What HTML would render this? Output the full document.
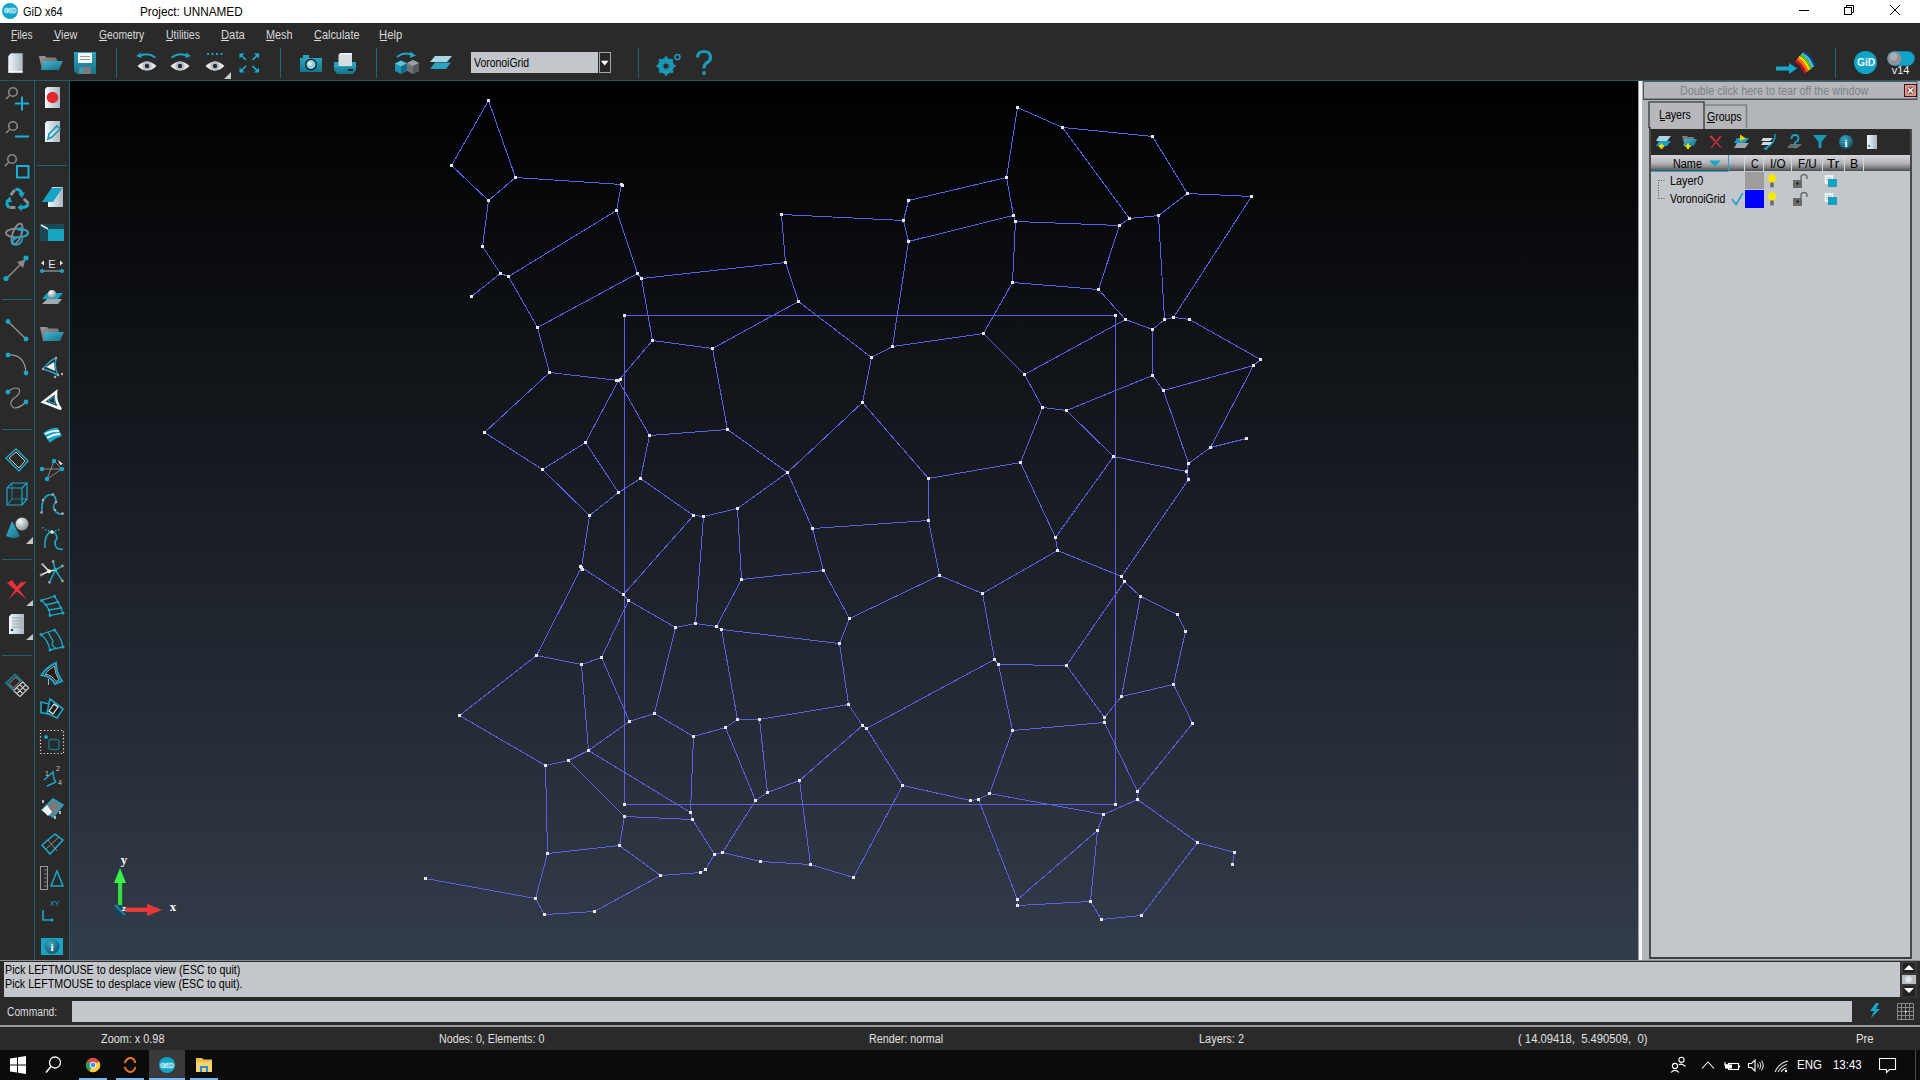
<!DOCTYPE html>
<html><head><meta charset="utf-8">
<style>
*{margin:0;padding:0;box-sizing:border-box}
html,body{width:1920px;height:1080px;overflow:hidden;background:#2a2a2a;font-family:"Liberation Sans",sans-serif;font-size:12px}
.a{position:absolute}
.t{position:absolute;white-space:nowrap;line-height:1;transform-origin:0 0}
svg{position:absolute;overflow:visible}
</style></head><body>
<!-- title bar -->
<div class="a" style="left:0;top:0;width:1920px;height:23px;background:#fff"></div>
<!-- menu + toolbar bg -->
<div class="a" style="left:0;top:23px;width:1920px;height:57px;background:#2a2a2a"></div>
<div class="a" style="left:0;top:80px;width:1920px;height:1px;background:#1d5f70"></div>
<!-- left toolbar separators -->
<div class="a" style="left:34px;top:81px;width:1px;height:879px;background:#1d6172"></div>
<div class="a" style="left:69px;top:81px;width:1px;height:879px;background:#1d6172"></div>
<!-- canvas -->
<div class="a" style="left:70px;top:81px;width:1568px;height:879px;background:linear-gradient(#000000,#333c4a)"></div>
<svg width="1568" height="879" viewBox="70 81 1568 879" style="position:absolute;left:70px;top:81px"><path d="M488.5 100.5L451.5 165.5M488.5 100.5L515.5 177.5M451.5 165.5L488.5 200.5M515.5 177.5L488.5 200.5M515.5 177.5L621.5 184.5M621.5 184.5L616.5 210.5M488.5 200.5L482.5 246.5M482.5 246.5L500.5 273.5M500.5 273.5L508.5 276.5M500.5 273.5L471.5 296.5M508.5 276.5L616.5 210.5M616.5 210.5L637.5 273.5M637.5 273.5L537.5 327.5M508.5 276.5L537.5 327.5M637.5 273.5L641.5 278.5M641.5 278.5L785.5 262.5M641.5 278.5L652.5 340.5M537.5 327.5L549.5 372.5M652.5 340.5L712.5 348.5M652.5 340.5L618.5 380.5M781.5 214.5L903.5 220.5M781.5 214.5L785.5 262.5M903.5 220.5L908.5 200.5M903.5 220.5L908.5 241.5M908.5 200.5L1006.5 177.5M908.5 241.5L1013.5 215.5M908.5 241.5L892.5 346.5M785.5 262.5L798.5 301.5M798.5 301.5L712.5 348.5M798.5 301.5L871.5 357.5M892.5 346.5L871.5 357.5M892.5 346.5L983.5 333.5M1017.5 107.5L1062.5 127.5M1017.5 107.5L1006.5 177.5M1062.5 127.5L1152.5 136.5M1062.5 127.5L1129.5 218.5M1152.5 136.5L1187.5 193.5M1187.5 193.5L1251.5 196.5M1187.5 193.5L1158.5 215.5M1158.5 215.5L1129.5 218.5M1129.5 218.5L1119.5 225.5M1006.5 177.5L1013.5 215.5M1013.5 215.5L1015.5 221.5M1015.5 221.5L1119.5 225.5M1015.5 221.5L1012.5 282.5M1119.5 225.5L1098.5 289.5M1012.5 282.5L1098.5 289.5M1012.5 282.5L983.5 333.5M1098.5 289.5L1125.5 319.5M1125.5 319.5L1152.5 329.5M1152.5 329.5L1164.5 319.5M1164.5 319.5L1158.5 215.5M1164.5 319.5L1173.5 317.5M1173.5 317.5L1189.5 319.5M1173.5 317.5L1251.5 196.5M1189.5 319.5L1260.5 359.5M983.5 333.5L1024.5 374.5M1024.5 374.5L1125.5 319.5M1024.5 374.5L1042.5 407.5M1042.5 407.5L1066.5 410.5M1066.5 410.5L1152.5 375.5M1152.5 375.5L1152.5 329.5M1066.5 410.5L1113.5 456.5M1042.5 407.5L1020.5 462.5M1020.5 462.5L928.5 478.5M928.5 478.5L862.5 402.5M928.5 478.5L928.5 520.5M928.5 520.5L812.5 528.5M928.5 520.5L939.5 575.5M1020.5 462.5L1055.5 537.5M1055.5 537.5L1113.5 456.5M1055.5 537.5L1057.5 550.5M1057.5 550.5L982.5 593.5M1057.5 550.5L1121.5 576.5M939.5 575.5L982.5 593.5M1121.5 576.5L1124.5 581.5M1121.5 576.5L1188.5 479.5M1260.5 359.5L1253.5 365.5M1253.5 365.5L1163.5 390.5M1253.5 365.5L1210.5 447.5M1163.5 390.5L1152.5 375.5M1163.5 390.5L1188.5 463.5M1210.5 447.5L1246.5 438.5M1210.5 447.5L1188.5 463.5M1188.5 463.5L1186.5 471.5M1186.5 471.5L1113.5 456.5M1186.5 471.5L1188.5 479.5M549.5 372.5L618.5 380.5M549.5 372.5L484.5 432.5M618.5 380.5L585.5 442.5M618.5 380.5L649.5 435.5M484.5 432.5L542.5 469.5M542.5 469.5L585.5 442.5M542.5 469.5L589.5 515.5M585.5 442.5L618.5 492.5M618.5 492.5L589.5 515.5M618.5 492.5L640.5 478.5M640.5 478.5L649.5 435.5M640.5 478.5L693.5 515.5M589.5 515.5L581.5 567.5M581.5 567.5L623.5 594.5M581.5 567.5L536.5 655.5M623.5 594.5L693.5 515.5M623.5 594.5L628.5 600.5M727.5 429.5L649.5 435.5M727.5 429.5L712.5 348.5M727.5 429.5L787.5 472.5M787.5 472.5L862.5 402.5M862.5 402.5L871.5 357.5M787.5 472.5L812.5 528.5M787.5 472.5L737.5 508.5M737.5 508.5L703.5 516.5M703.5 516.5L693.5 515.5M737.5 508.5L741.5 579.5M812.5 528.5L823.5 570.5M823.5 570.5L741.5 579.5M703.5 516.5L695.5 623.5M823.5 570.5L849.5 618.5M628.5 600.5L675.5 627.5M628.5 600.5L601.5 657.5M675.5 627.5L695.5 623.5M675.5 627.5L654.5 713.5M536.5 655.5L581.5 664.5M536.5 655.5L459.5 715.5M581.5 664.5L601.5 657.5M581.5 664.5L588.5 750.5M601.5 657.5L629.5 721.5M629.5 721.5L654.5 713.5M629.5 721.5L588.5 750.5M459.5 715.5L545.5 765.5M545.5 765.5L568.5 760.5M568.5 760.5L588.5 750.5M568.5 760.5L624.5 816.5M545.5 765.5L547.5 853.5M588.5 750.5L690.5 812.5M849.5 618.5L839.5 643.5M849.5 618.5L939.5 575.5M695.5 623.5L716.5 626.5M716.5 626.5L741.5 579.5M716.5 626.5L721.5 629.5M721.5 629.5L839.5 643.5M721.5 629.5L737.5 719.5M839.5 643.5L848.5 704.5M654.5 713.5L693.5 736.5M693.5 736.5L725.5 727.5M725.5 727.5L737.5 719.5M737.5 719.5L759.5 719.5M759.5 719.5L848.5 704.5M848.5 704.5L862.5 725.5M862.5 725.5L866.5 728.5M866.5 728.5L994.5 659.5M862.5 725.5L799.5 780.5M799.5 780.5L767.5 792.5M767.5 792.5L759.5 719.5M767.5 792.5L755.5 800.5M755.5 800.5L725.5 727.5M866.5 728.5L902.5 785.5M902.5 785.5L970.5 800.5M693.5 736.5L690.5 812.5M690.5 812.5L692.5 819.5M692.5 819.5L624.5 816.5M692.5 819.5L714.5 854.5M714.5 854.5L722.5 852.5M722.5 852.5L755.5 800.5M722.5 852.5L760.5 861.5M760.5 861.5L810.5 864.5M810.5 864.5L799.5 780.5M810.5 864.5L853.5 877.5M853.5 877.5L902.5 785.5M714.5 854.5L705.5 869.5M705.5 869.5L700.5 872.5M700.5 872.5L660.5 875.5M982.5 593.5L994.5 659.5M994.5 659.5L998.5 664.5M998.5 664.5L1066.5 665.5M998.5 664.5L1012.5 730.5M1066.5 665.5L1124.5 581.5M1066.5 665.5L1104.5 717.5M1124.5 581.5L1140.5 596.5M1140.5 596.5L1121.5 696.5M1121.5 696.5L1104.5 717.5M1104.5 717.5L1104.5 722.5M1104.5 722.5L1012.5 730.5M1104.5 722.5L1137.5 791.5M1137.5 791.5L1137.5 799.5M1137.5 791.5L1192.5 723.5M1137.5 799.5L1103.5 814.5M1137.5 799.5L1197.5 842.5M1103.5 814.5L989.5 793.5M1103.5 814.5L1097.5 830.5M989.5 793.5L978.5 799.5M989.5 793.5L1012.5 730.5M978.5 799.5L970.5 800.5M978.5 799.5L1017.5 899.5M1140.5 596.5L1177.5 614.5M1177.5 614.5L1185.5 631.5M1185.5 631.5L1173.5 684.5M1173.5 684.5L1121.5 696.5M1173.5 684.5L1192.5 723.5M624.5 816.5L619.5 845.5M619.5 845.5L547.5 853.5M619.5 845.5L660.5 875.5M547.5 853.5L535.5 898.5M425.5 878.5L535.5 898.5M535.5 898.5L544.5 914.5M544.5 914.5L594.5 911.5M594.5 911.5L660.5 875.5M1097.5 830.5L1017.5 899.5M1097.5 830.5L1090.5 901.5M1017.5 899.5L1017.5 905.5M1017.5 905.5L1090.5 901.5M1090.5 901.5L1101.5 919.5M1101.5 919.5L1141.5 915.5M1141.5 915.5L1197.5 842.5M1197.5 842.5L1234.5 852.5M1234.5 852.5L1232.5 864.5M624.5 315.5L1115.5 315.5M1115.5 315.5L1115.5 804.5M1115.5 804.5L624.5 804.5M624.5 804.5L624.5 315.5" stroke="#5e5ee6" stroke-width="1" fill="none" shape-rendering="crispEdges"/><path d="M487 99h3v3h-3zM450 164h3v3h-3zM514 176h3v3h-3zM487 199h3v3h-3zM620 183h3v3h-3zM615 209h3v3h-3zM481 245h3v3h-3zM499 272h3v3h-3zM507 275h3v3h-3zM470 295h3v3h-3zM636 272h3v3h-3zM640 277h3v3h-3zM536 326h3v3h-3zM651 339h3v3h-3zM780 213h3v3h-3zM902 219h3v3h-3zM907 199h3v3h-3zM907 240h3v3h-3zM784 261h3v3h-3zM797 300h3v3h-3zM711 347h3v3h-3zM891 345h3v3h-3zM1016 106h3v3h-3zM1061 126h3v3h-3zM1151 135h3v3h-3zM1005 176h3v3h-3zM1186 192h3v3h-3zM1012 214h3v3h-3zM1014 220h3v3h-3zM1128 217h3v3h-3zM1157 214h3v3h-3zM1118 224h3v3h-3zM1011 281h3v3h-3zM1097 288h3v3h-3zM1124 318h3v3h-3zM1163 318h3v3h-3zM1172 316h3v3h-3zM1188 318h3v3h-3zM1151 328h3v3h-3zM982 332h3v3h-3zM1250 195h3v3h-3zM548 371h3v3h-3zM617 379h3v3h-3zM483 431h3v3h-3zM648 434h3v3h-3zM584 441h3v3h-3zM541 468h3v3h-3zM639 477h3v3h-3zM617 491h3v3h-3zM588 514h3v3h-3zM580 566h3v3h-3zM622 593h3v3h-3zM726 428h3v3h-3zM870 356h3v3h-3zM861 401h3v3h-3zM786 471h3v3h-3zM692 514h3v3h-3zM702 515h3v3h-3zM736 507h3v3h-3zM811 527h3v3h-3zM822 569h3v3h-3zM740 578h3v3h-3zM1023 373h3v3h-3zM1151 374h3v3h-3zM1041 406h3v3h-3zM1065 409h3v3h-3zM1112 455h3v3h-3zM1019 461h3v3h-3zM927 477h3v3h-3zM927 519h3v3h-3zM1054 536h3v3h-3zM1056 549h3v3h-3zM938 574h3v3h-3zM981 592h3v3h-3zM1120 575h3v3h-3zM1123 580h3v3h-3zM1259 358h3v3h-3zM1252 364h3v3h-3zM1162 389h3v3h-3zM1245 437h3v3h-3zM1209 446h3v3h-3zM1187 462h3v3h-3zM1185 470h3v3h-3zM1187 478h3v3h-3zM627 599h3v3h-3zM674 626h3v3h-3zM535 654h3v3h-3zM580 663h3v3h-3zM600 656h3v3h-3zM458 714h3v3h-3zM653 712h3v3h-3zM628 720h3v3h-3zM587 749h3v3h-3zM567 759h3v3h-3zM544 764h3v3h-3zM623 815h3v3h-3zM848 617h3v3h-3zM694 622h3v3h-3zM715 625h3v3h-3zM720 628h3v3h-3zM838 642h3v3h-3zM847 703h3v3h-3zM736 718h3v3h-3zM758 718h3v3h-3zM724 726h3v3h-3zM692 735h3v3h-3zM861 724h3v3h-3zM865 727h3v3h-3zM798 779h3v3h-3zM766 791h3v3h-3zM754 799h3v3h-3zM901 784h3v3h-3zM689 811h3v3h-3zM691 818h3v3h-3zM1139 595h3v3h-3zM993 658h3v3h-3zM997 663h3v3h-3zM1065 664h3v3h-3zM1120 695h3v3h-3zM1103 716h3v3h-3zM1103 721h3v3h-3zM1011 729h3v3h-3zM1136 790h3v3h-3zM1136 798h3v3h-3zM988 792h3v3h-3zM977 798h3v3h-3zM969 799h3v3h-3zM1102 813h3v3h-3zM1176 613h3v3h-3zM1184 630h3v3h-3zM1172 683h3v3h-3zM1191 722h3v3h-3zM618 844h3v3h-3zM546 852h3v3h-3zM424 877h3v3h-3zM659 874h3v3h-3zM534 897h3v3h-3zM543 913h3v3h-3zM593 910h3v3h-3zM713 853h3v3h-3zM721 851h3v3h-3zM759 860h3v3h-3zM809 863h3v3h-3zM852 876h3v3h-3zM704 868h3v3h-3zM699 871h3v3h-3zM1096 829h3v3h-3zM1196 841h3v3h-3zM1016 898h3v3h-3zM1016 904h3v3h-3zM1089 900h3v3h-3zM1100 918h3v3h-3zM1140 914h3v3h-3zM1233 851h3v3h-3zM1231 863h3v3h-3zM623 314h3v3h-3zM1114 314h3v3h-3zM1114 803h3v3h-3zM623 803h3v3h-3zM621 184h3v3h-3zM615 379h3v3h-3zM619 378h3v3h-3zM579 565h3v3h-3zM581 568h3v3h-3z" fill="#e6e6e6"/></svg>
<!-- sash and right panel -->
<div class="a" style="left:1638px;top:81px;width:1px;height:879px;background:#9a9ca0"></div>
<div class="a" style="left:1639px;top:81px;width:3px;height:879px;background:#f4f6f8"></div>
<div class="a" style="left:1642px;top:81px;width:278px;height:879px;background:#b2b5b9"></div>
<!-- message area -->
<div class="a" style="left:0;top:960px;width:1920px;height:1px;background:#8a8c90"></div>
<div class="a" style="left:0;top:961px;width:1920px;height:36px;background:#2a2a2a"></div>
<div class="a" style="left:4px;top:962px;width:1896px;height:35px;background:#c3c6ca"></div>
<div class="a" style="left:0;top:997px;width:1920px;height:28px;background:#2a2a2a"></div>
<div class="a" style="left:72px;top:1001px;width:1780px;height:21px;background:#c3c6ca"></div>
<div class="a" style="left:0;top:1025px;width:1920px;height:2px;background:#9a9a9a"></div>
<div class="a" style="left:0;top:1027px;width:1920px;height:23px;background:#2a2a2a"></div>
<!-- taskbar -->
<div class="a" style="left:0;top:1050px;width:1920px;height:30px;background:#0b0b0c"></div>
<svg width="1920" height="1080" style="left:0;top:0" viewBox="0 0 1920 1080">
<defs>
<linearGradient id="gDoc" x1="0" x2="1" y1="0" y2="0"><stop offset="0" stop-color="#f0faff"/><stop offset="1" stop-color="#a9b6be"/></linearGradient>
<linearGradient id="gTeal" x1="0" x2="1" y1="0" y2="1"><stop offset="0" stop-color="#47bad6"/><stop offset="1" stop-color="#146f86"/></linearGradient>
<linearGradient id="gTeal2" x1="0" x2="0" y1="0" y2="1"><stop offset="0" stop-color="#2aa2c0"/><stop offset="1" stop-color="#16758d"/></linearGradient>
<linearGradient id="gGrey" x1="0" x2="1" y1="0" y2="1"><stop offset="0" stop-color="#9a9a9a"/><stop offset="1" stop-color="#5c5c5c"/></linearGradient>
<radialGradient id="gSph" cx="0.35" cy="0.3" r="0.8"><stop offset="0" stop-color="#f4f8fa"/><stop offset="1" stop-color="#7d8c94"/></radialGradient>
<radialGradient id="gInfo" cx="0.4" cy="0.3" r="0.8"><stop offset="0" stop-color="#3aa6c0"/><stop offset="1" stop-color="#0b4d60"/></radialGradient>
<linearGradient id="gHdr" x1="0" x2="0" y1="0" y2="1"><stop offset="0" stop-color="#d4d6d9"/><stop offset="0.5" stop-color="#b4b6b9"/><stop offset="0.8" stop-color="#7a7c7f"/><stop offset="1" stop-color="#4a4c4e"/></linearGradient>
</defs>
<!-- title bar icons -->
<circle cx="10" cy="11" r="8" fill="#12a5c8"/>
<text x="10" y="13" font-family="Liberation Sans" font-size="7" font-weight="700" fill="none" stroke="#d9f2f8" stroke-width="0.6" text-anchor="middle">GiD</text>
<path d="M1799 10.5H1809" stroke="#000" stroke-width="1"/>
<path d="M1846.5 7.5V5.5H1853.5V12.5H1851.5" fill="none" stroke="#000" stroke-width="1"/>
<rect x="1844.5" y="7.5" width="7" height="7" fill="none" stroke="#000" stroke-width="1"/>
<path d="M1890 5L1900 15M1900 5L1890 15" stroke="#000" stroke-width="1"/>
<!-- toolbar separators -->
<path d="M116.5 48V78M280.5 48V78M376.5 48V78M638.5 48V78M1835.5 48V78" stroke="#1d6678" stroke-width="1"/>
<!-- new doc -->
<path d="M11 53H23V73H8V56Z" fill="url(#gDoc)" stroke="#3a3a3a" stroke-width="0.6"/>
<path d="M8.5 71H22.5V72.6H8.5Z" fill="#f8fcff"/>
<!-- open folder -->
<path d="M39 56H45L46.5 57.5H56L57 60V70H42Z" fill="url(#gGrey)"/>
<path d="M44 61H63L59 70H41Z" fill="url(#gTeal)"/>
<!-- save -->
<path d="M74 52H96V74H77L74 71Z" fill="url(#gTeal2)"/>
<rect x="78" y="53" width="14" height="10" fill="#f6f6f6"/>
<path d="M80 56.5H90M80 59.5H90" stroke="#9a9a9a" stroke-width="1"/>
<rect x="79" y="67" width="12" height="7" fill="#7a7a7a"/>
<rect x="80" y="68" width="3" height="5" fill="#19a7c9"/>
<!-- eyes -->
<g id="eye"></g>
<path d="M137.5 66Q147 57 156.5 66Q147 75 137.5 66Z" fill="#e6e8ea"/>
<circle cx="147" cy="66" r="4.6" fill="#b4c0c8"/><circle cx="147" cy="66" r="2.2" fill="#26292e"/>
<path d="M139 56.5Q147 51.5 155.5 57.5" fill="none" stroke="#1aa4c4" stroke-width="2"/>
<path d="M136 56L141 52.5L141.5 58Z" fill="#1aa4c4"/>
<path d="M170.5 66Q180 57 189.5 66Q180 75 170.5 66Z" fill="#e6e8ea"/>
<circle cx="180" cy="66" r="4.6" fill="#b4c0c8"/><circle cx="180" cy="66" r="2.2" fill="#26292e"/>
<path d="M171.5 57.5Q180 51.5 188 56.5" fill="none" stroke="#1aa4c4" stroke-width="2"/>
<path d="M191 56L186 52.5L185.5 58Z" fill="#1aa4c4"/>
<path d="M205.5 66Q215 57 224.5 66Q215 75 205.5 66Z" fill="#e6e8ea"/>
<circle cx="215" cy="66" r="4.6" fill="#b4c0c8"/><circle cx="215" cy="66" r="2.2" fill="#26292e"/>
<path d="M207 53h2v2h-2zM211.5 53h2v2h-2zM216 53h2v2h-2zM220.5 53h2v2h-2z" fill="#1aa4c4"/>
<path d="M231 72V79H224Z" fill="#c8c8cc"/>
<!-- zoom fit arrows -->
<g stroke="#17aed4" stroke-width="1.6" fill="none"><path d="M241 55L246 60M257.5 55L252.5 60M241 71L246 66M257.5 71L252.5 66"/></g>
<path d="M239.5 53.5H244.5L239.5 58.5Z M259 53.5H254L259 58.5Z M239.5 72.5H244.5L239.5 67.5Z M259 72.5H254L259 67.5Z" fill="#17aed4"/>
<!-- camera -->
<rect x="300" y="58" width="22" height="14" fill="url(#gTeal2)"/>
<rect x="303" y="55" width="6" height="3" fill="#2aa2c0"/>
<circle cx="311" cy="64.5" r="5.2" fill="#8fd0e0" stroke="#0d1a1e" stroke-width="1.3"/>
<circle cx="310" cy="63.5" r="2" fill="#d8f2f8"/>
<!-- printer -->
<path d="M334 62H356V70L353 74H337L334 70Z" fill="url(#gTeal2)"/>
<path d="M334 62H356V67H334Z" fill="#2b9fbb"/>
<path d="M338.5 55L340.5 53H352V66H338.5Z" fill="#d4dde2"/>
<path d="M338.5 55L340.5 53H352V54.5H340Z" fill="#f4f8fa"/>
<rect x="348" y="69" width="5" height="2" fill="#1d2a2e"/>
<!-- cubes -->
<path d="M397 57Q404 51 413 55" fill="none" stroke="#1aa4c4" stroke-width="2"/>
<path d="M410 51.5L416 55.5L410 58Z" fill="#1aa4c4"/>
<path d="M401 60.5L407 63.5V71L401 74L395 71V63.5Z" fill="#1f93b0"/>
<path d="M395 63.5L401 60.5L407 63.5L401 66.5Z" fill="#5cc4dc"/><path d="M401 66.5L407 63.5V71L401 74Z" fill="#146f86"/>
<path d="M413 60L419 63V71L413 74L407 71V63Z" fill="#6f7478"/>
<path d="M407 63L413 60L419 63L413 66Z" fill="#9aa0a4"/><path d="M413 66L419 63V71L413 74Z" fill="#555a5e"/>
<!-- layers -->
<path d="M435 56H452L447 62H430Z" fill="#a9d6e2"/>
<path d="M435 62.5H451L446 69H430Z" fill="#2ba3bf"/>
<!-- combo -->
<rect x="471" y="52" width="127" height="21" fill="#c3c6ca"/>
<rect x="599.5" y="52.5" width="11" height="20" fill="#262626" stroke="#a6a8ab" stroke-width="1"/>
<path d="M600.8 60.8H608.6L604.7 65.6Z" fill="#fff"/>
<!-- gear -->
<circle cx="666" cy="66" r="6" fill="none" stroke="#1b9ab8" stroke-width="4"/>
<g stroke="#1b9ab8" stroke-width="2.6"><path d="M666 56.5V75.5M656.5 66H675.5M659.3 59.3L672.7 72.7M672.7 59.3L659.3 72.7"/></g>
<circle cx="666" cy="66" r="2.6" fill="#2a2a2a"/>
<circle cx="677.5" cy="57" r="2.6" fill="none" stroke="#1b9ab8" stroke-width="1.5"/>
<!-- question -->
<path d="M697.5 57.5Q697.5 51.5 704 51.5Q710.5 51.5 710.5 57.5Q710.5 61 706.5 63Q704 64.5 704 68.5" fill="none" stroke="#1b9ab8" stroke-width="3.2"/>
<circle cx="704" cy="73" r="2" fill="#1b9ab8"/>
<!-- right toolbar -->
<rect x="1776" y="66.5" width="14" height="4" fill="#17a9cc"/>
<path d="M1789 63L1797 68.5L1789 74Z" fill="#17a9cc"/>
<g fill="none" stroke-width="2.4">
<path d="M1795.5 61Q1801 63 1805.5 73" stroke="#c8102e"/>
<path d="M1797.2 59Q1802.8 61 1807.5 71.5" stroke="#ff6a00"/>
<path d="M1798.9 57Q1804.6 59 1809.5 70" stroke="#ffd800"/>
<path d="M1800.6 55Q1806.4 57 1811.4 68.5" stroke="#53c43a"/>
<path d="M1802.3 53.5Q1808.2 55.2 1813.2 67" stroke="#4fb8e8"/>
<path d="M1804 52.5Q1810 54 1815 65.5" stroke="#0a3f7a"/>
</g>
<circle cx="1865.5" cy="62.5" r="11.5" fill="#0fa3c6"/>
<rect x="1887" y="51" width="28" height="15" rx="7.5" fill="#0fa3c6" stroke="#1b3a44" stroke-width="0.6"/>
<circle cx="1894.5" cy="58.5" r="7" fill="#8c9297"/>
<circle cx="1893.5" cy="56.5" r="4" fill="#a7adb2"/>
<!-- left toolbar col separators (horizontal) -->
<path d="M2 299.5H32M2 429.5H32M2 559.5H32M2 655.5H32M37 165.5H67" stroke="#1d6678" stroke-width="1"/>
<g fill="none" stroke="#8a8a8a" stroke-width="1.6">
<circle cx="13" cy="92" r="4.3"/><path d="M9.8 95.2L6 99"/>
<circle cx="13" cy="126" r="4.3"/><path d="M9.8 129.2L6 133"/>
<circle cx="12" cy="159" r="4.3"/><path d="M8.8 162.2L5 166"/>
</g>
<g fill="none" stroke="#17b0d8" stroke-width="2">
<path d="M15 103.5H29M22 96.5V110.5"/>
<path d="M15 136.5H29"/>
<rect x="17" y="166" width="11.5" height="11.5"/>
</g>
<!-- recycle -->
<g fill="none" stroke-width="3">
<path d="M10.7 195.2L14.8 189.9M23.9 198.7L28.3 203.4M10 207.5H15.4" stroke="#8e8e8e"/>
<path d="M15.4 189.5Q19.5 188.5 21.5 193M28.3 203.5Q27.5 207.5 21.5 207.5M9.4 207.8Q5.5 205 7.8 200.5" stroke="#17a8cc"/>
</g>
<path d="M18.3 193.3L25 192.3L22 198Z M21.8 203.8L17.5 207.5L21.8 211.2Z M5.2 201.5L9.8 196.5L12.2 202.2Z" fill="#17a8cc"/>
<!-- rotate atom -->
<g fill="none" stroke-width="1.8">
<ellipse cx="17" cy="233" rx="11" ry="4.3" stroke="#8e8e8e"/>
<ellipse cx="17" cy="234" rx="4.3" ry="11" stroke="#8e8e8e" transform="rotate(20 17 234)"/>
<path d="M17 228.7Q28 229 28 233Q28 237.3 17 237.3" stroke="#17a8cc"/>
<path d="M22.6 238.6Q20.5 245.5 15.5 244.8Q12.5 244 12.5 240" stroke="#17a8cc"/>
</g>
<path d="M20.5 226.5L23.5 231L18 231Z M12 236.5L17.5 238L13 241.5Z" fill="#17a8cc"/>
<!-- arrow line -->
<path d="M7 278L24 261" stroke="#8a8a8a" stroke-width="1.6"/>
<path d="M25.5 259.5L23 268L17 262Z" fill="#8a8a8a"/>
<circle cx="6" cy="278.5" r="2.6" fill="#17a8cc"/><circle cx="26" cy="258" r="2.6" fill="#17a8cc"/>
<!-- line -->
<path d="M8 321.5L26 339" stroke="#9a9a9a" stroke-width="1.2"/>
<circle cx="8" cy="321.5" r="2.4" fill="#17a8cc"/><circle cx="26" cy="339" r="2.4" fill="#17a8cc"/>
<!-- arc -->
<path d="M8 355Q25 354 26 373" fill="none" stroke="#9a9a9a" stroke-width="1.2"/>
<circle cx="8" cy="355" r="2.4" fill="#17a8cc"/><circle cx="26" cy="373" r="2.4" fill="#17a8cc"/>
<!-- s curve -->
<path d="M8 392Q14 386 19 389Q22 393 13 399Q8 404 14 408Q20 408 26 402" fill="none" stroke="#9a9a9a" stroke-width="1.2"/>
<circle cx="8" cy="392" r="2.4" fill="#17a8cc"/><circle cx="26" cy="402" r="2.4" fill="#17a8cc"/>
<!-- diamond surface -->
<path d="M6 458L16 449L28 461L19 471Z" fill="none" stroke="#17a8cc" stroke-width="1.5"/>
<path d="M9 458L16 452L25 461L19 468Z" fill="none" stroke="#d6c7c0" stroke-width="1"/>
<!-- cube wire -->
<g fill="none" stroke="#17a8cc" stroke-width="1.2">
<path d="M7 488H22V505H7Z M12 483H27V499H22 M7 488L12 483 M22 488L27 483 M22 505L27 499"/>
<path d="M12 483V499H22M7 505L12 499" stroke-opacity="0.6"/>
</g>
<!-- cone sphere -->
<circle cx="22" cy="524" r="6.5" fill="url(#gSph)"/>
<path d="M12 521L20 536Q15 540 6 536Z" fill="url(#gTeal)"/>
<path d="M33 537V544H26Z" fill="#c8c8cc"/>
<!-- red X -->
<path d="M7 583L12 580L27 600Z" fill="#e8313c"/><path d="M27 581.5L20 582.5L8 600Z" fill="#e8313c"/>
<path d="M33 600V606H26Z" fill="#c8c8cc"/>
<!-- doc -->
<path d="M11.5 614H24V634H9V616.5Z" fill="url(#gDoc)"/>
<path d="M12 618H22M12 621H22M12 624H22M12 627H22" stroke="#9aa6ac" stroke-width="1"/>
<circle cx="12" cy="630" r="1.3" fill="#105a6e"/>
<path d="M33 634V640H26Z" fill="#c8c8cc"/>
<!-- mesh surface -->
<path d="M13.6 690.5L6.0 683.1L15.3 674.4L22.7 681.8" fill="none" stroke="#157d96" stroke-width="1.8"/>
<path d="M8.8 683.7L15.8 677.1L20.2 681.5L13.3 688.1Z" fill="none" stroke="#d0b0a8" stroke-width="0.8"/>
<path d="M13.6 690.5L22.7 681.8M16.8 693.6L25.7 684.8M19.9 696.6L28.7 687.8M13.6 690.5L19.9 696.6M16.7 687.6L22.8 693.7M19.7 684.7L25.8 690.7M22.7 681.8L28.7 687.8" fill="none" stroke="#d8d8d8" stroke-width="1.1"/>
<!-- col 2 -->
<path d="M47 87H60V108H45V89Z" fill="url(#gDoc)"/>
<circle cx="52.5" cy="97.5" r="5.8" fill="#e4262f"/>
<path d="M47 121H60V142H45V123Z" fill="url(#gDoc)"/>
<path d="M48 139L49 134L57 126L60 129L52 137Z" fill="none" stroke="#1b9ab8" stroke-width="1.6"/>
<!-- surface -->
<path d="M52 187H63V207H48V202Z" fill="url(#gDoc)"/>
<path d="M51.5 188H62.5L53 202H42Z" fill="#17a4c4"/>
<!-- box -->
<path d="M40 224H64V241H40Z" fill="#1a4a56"/>
<path d="M48 229H64V241H48Z" fill="#1aa2c2"/>
<path d="M41 225L48 229" stroke="#e8e8e8" stroke-width="1.5"/>
<!-- E arrows -->
<text x="52" y="268" font-family="Liberation Sans" font-size="11" fill="#e8e8e8" text-anchor="middle">E</text>
<path d="M41 263L44 260.5V265.5Z M63 263L60 260.5V265.5Z" fill="#e8e8e8"/>
<path d="M42 271H62" stroke="#8a8a8a" stroke-width="1.5"/>
<circle cx="42" cy="271" r="2" fill="#17a8cc"/><circle cx="62" cy="271" r="2" fill="#17a8cc"/>
<!-- layers with sphere -->
<path d="M47 299H62L58 304H42Z" fill="#a0a8b0"/>
<path d="M47 293H63L58 299H42Z" fill="#17a0c0"/>
<circle cx="52" cy="294" r="4" fill="url(#gSph)"/>
<!-- folder -->
<path d="M40 327H47L48.5 328.5H58L59 331V341H43Z" fill="url(#gGrey)"/>
<path d="M45 332H64L60 341H43Z" fill="url(#gTeal)"/>
<!-- surface1 -->
<path d="M43 369Q50 360 56 358Q54 368 58 375Q50 371 43 369Z" fill="none" stroke="#17a8cc" stroke-width="1.4"/>
<path d="M46 367L54 362L55 371Z" fill="#f0f0f0"/>
<circle cx="43" cy="369" r="1.2" fill="#c0a8a0"/><circle cx="56" cy="358" r="1.2" fill="#c0a8a0"/><circle cx="58" cy="375" r="1.2" fill="#c0a8a0"/><circle cx="62" cy="374" r="1.2" fill="#c0a8a0"/><circle cx="55" cy="377" r="1.2" fill="#c0a8a0"/>
<!-- surface2 -->
<path d="M43 402Q51 396 56 392Q55 402 61 409Q51 405 43 402Z" fill="none" stroke="#f0f8fa" stroke-width="2.6"/>
<path d="M48 401L54 397L55 404Z" fill="none" stroke="#17a8cc" stroke-width="1"/>
<!-- striped surface -->
<path d="M43 433Q52 427 58 428L62 436Q55 438 50 443Z" fill="#17a8cc"/>
<path d="M45 434Q53 430 59 431M47 438Q54 434 60 434" stroke="#f4f4f4" stroke-width="1.8" fill="none"/>
<!-- points connected -->
<path d="M42 469H62L47 479M47 479L54 461L62 469" stroke="#8a8a8a" stroke-width="1" fill="none"/>
<circle cx="42" cy="469" r="2.2" fill="#17a8cc"/><circle cx="62" cy="469" r="2.2" fill="#17a8cc"/><circle cx="54" cy="461" r="2.2" fill="#17a8cc"/><circle cx="47" cy="479" r="2.2" fill="#17a8cc"/>
<path d="M58 460L63 464L60 465Z" fill="#e8e8e8"/>
<!-- nurbs -->
<path d="M42 512Q41 499 48 495Q56 493 56 502Q51 507 56 512Q60 515 63 514" fill="none" stroke="#17a8cc" stroke-width="1.6"/>
<circle cx="41.5" cy="512.5" r="1.3" fill="#b0a8a4"/><circle cx="43" cy="500" r="1.3" fill="#b0a8a4"/><circle cx="53" cy="494.5" r="1.3" fill="#b0a8a4"/><circle cx="56" cy="502" r="1.3" fill="#b0a8a4"/><circle cx="55" cy="510" r="1.3" fill="#b0a8a4"/><circle cx="62.5" cy="513.5" r="1.3" fill="#b0a8a4"/>
<!-- curve with dots -->
<path d="M45 548Q44 536 50 532Q56 531 57 538Q53 544 57 548Q60 550 63 549" fill="none" stroke="#17a8cc" stroke-width="1.6"/>
<path d="M42 527h1.5v1.5h-1.5zM45 529h1.5v1.5h-1.5zM48 530h1.5v1.5h-1.5zM55 530h1.5v1.5h-1.5zM58 529h1.5v1.5h-1.5z" fill="#17a8cc"/>
<circle cx="52" cy="532" r="1.8" fill="#f0f0f0"/>
<!-- star -->
<g stroke="#17a8cc" stroke-width="1.5"><path d="M55.4 570L53.1 561.5M55.4 570L62.4 566M55.4 570L62.4 581M55.4 570L49.4 582.3"/></g>
<g stroke="#e0e0e0" stroke-width="1.6" fill="none"><path d="M55.4 570L49 571.2L42.5 564.3M49 571.2L41.1 575"/></g>
<circle cx="49" cy="571.2" r="2" fill="#f4f4f4"/><circle cx="55.4" cy="570" r="1.8" fill="#3cc0e0"/>
<g fill="#9a9a9a"><circle cx="53.1" cy="561.5" r="1.4"/><circle cx="62.4" cy="566" r="1.4"/><circle cx="62.4" cy="581" r="1.4"/><circle cx="49.4" cy="582.3" r="1.4"/><circle cx="42.5" cy="564.3" r="1.4"/><circle cx="41.1" cy="575" r="1.4"/></g>
<!-- grid surface -->
<g fill="none" stroke="#17a8cc" stroke-width="1.3"><path d="M41.6 600.4L46 605L49 610L50 615.6L63 613L61 608L58 602L54.5 596.2Z M46 605L58 602M49 610L61 608"/></g>
<g fill="#17a8cc"><circle cx="41.6" cy="600.4" r="1.5"/><circle cx="54.5" cy="596.2" r="1.5"/><circle cx="63" cy="613" r="1.5"/><circle cx="50" cy="615.6" r="1.5"/><circle cx="46" cy="605" r="1.3"/><circle cx="58" cy="602" r="1.3"/><circle cx="49" cy="610" r="1.3"/><circle cx="61" cy="608" r="1.3"/></g>
<!-- surface -->
<g fill="none" stroke="#17a8cc" stroke-width="1.3"><path d="M41 634.5L48 632L54.5 630Q61 637 63 647L50 650Q48 640 41 634.5Z M48 632L53 641L52 645L56 648.5"/></g>
<g fill="#17a8cc"><circle cx="41" cy="634.5" r="1.5"/><circle cx="54.5" cy="630" r="1.5"/><circle cx="63" cy="647" r="1.5"/><circle cx="50" cy="650" r="1.5"/></g>
<!-- surface teal -->
<path d="M41.5 675Q48 666 56 663Q56 673 62 681L55 684Q51 676 41.5 675Z" fill="#1e1e1e" stroke="#17a8cc" stroke-width="2"/>
<path d="M45 674Q50 668 54.5 666Q55 674 59 680L56 681.5Q52 675 45 674Z" fill="none" stroke="#d8b8b0" stroke-width="0.9"/>
<path d="M48.5 679V685" stroke="#b0b0b0" stroke-width="1"/>
<!-- another -->
<path d="M41 702L51 704.5L48.5 714L41 712.5Z" fill="#1e1e1e" stroke="#17a8cc" stroke-width="1.6"/>
<path d="M50 699L63 709L57 718L47 713Z" fill="#1e1e1e" stroke="#17a8cc" stroke-width="1.6"/>
<path d="M49 711L54 704L58 707L53 714Z" fill="none" stroke="#e8e8e8" stroke-width="1.2"/>
<!-- dotted box -->
<rect x="40.5" y="730.5" width="23" height="23" fill="none" stroke="#e8e8e8" stroke-width="1.2" stroke-dasharray="1.2 2.2"/>
<circle cx="46" cy="737" r="2" fill="#17a8cc"/>
<rect x="49" y="739.5" width="10" height="10" rx="2" fill="none" stroke="#17708a" stroke-width="1.5"/>
<!-- numbered points -->
<path d="M44 780L53 772L54 779L56 782M47 786L56 782" stroke="#17a8cc" stroke-width="1.4" fill="none"/>
<text x="45" y="776" font-family="Liberation Sans" font-size="7" fill="#c8c8c8">1</text>
<text x="56" y="771" font-family="Liberation Sans" font-size="7" fill="#c8c8c8">2</text>
<text x="58" y="785" font-family="Liberation Sans" font-size="7" fill="#c8c8c8">4</text>
<!-- surface arrows -->
<path d="M42 810L53 799L63 805L53 817Z" fill="#7a7a7a" stroke="#17a8cc" stroke-width="1.6"/>
<path d="M42 810L47 805L52 812L48 816Z" fill="#f4f4f4"/>
<path d="M43 803V800M60 814V811M55 819V816" stroke="#f4f4f4" stroke-width="1.4"/>
<!-- diamond grid -->
<path d="M42 845L55 834L63 840L50 854Z" fill="none" stroke="#17a8cc" stroke-width="1.6"/>
<path d="M46 849L59 837M48 840L57 851" stroke="#8a8a8a" stroke-width="1"/>
<!-- ruler triangle -->
<rect x="40.5" y="866.5" width="7" height="23" fill="none" stroke="#9a9a9a" stroke-width="1"/>
<path d="M44 870H47M44 874H47M44 878H47M44 882H47M44 886H47" stroke="#9a9a9a" stroke-width="0.8"/>
<path d="M57 871L51 886H63Z" fill="none" stroke="#17a8cc" stroke-width="1.5"/>
<!-- xy -->
<text x="50" y="906" font-family="Liberation Sans" font-size="7" fill="#17a8cc">XY</text>
<path d="M43 910V920H51" fill="none" stroke="#17a8cc" stroke-width="1.6"/>
<path d="M51 918L54 920L51 922Z" fill="#17a8cc"/>
<!-- info -->
<rect x="41" y="938" width="22" height="17" fill="#1aa4c4"/>
<circle cx="52" cy="946.5" r="7.5" fill="url(#gInfo)"/>
<text x="52" y="951" font-family="Liberation Serif" font-weight="700" font-size="11" fill="#fff" text-anchor="middle">i</text>
<!-- right panel -->
<rect x="1643.5" y="81.5" width="273.5" height="17.5" fill="#b4b6ba" stroke="#55575a" stroke-width="1"/>
<path d="M1643 99.5H1917" stroke="#46484b" stroke-width="1.2"/>
<rect x="1904.6" y="84.6" width="11.8" height="11.8" fill="#d9745c" stroke="#40101c" stroke-width="1.2"/>
<rect x="1905.8" y="85.8" width="9.4" height="9.4" fill="none" stroke="#f4c0b4" stroke-width="0.9"/>
<path d="M1907.8 87.8L1913.2 93.2M1913.2 87.8L1907.8 93.2" stroke="#34404c" stroke-width="3"/>
<path d="M1907.8 87.8L1913.2 93.2M1913.2 87.8L1907.8 93.2" stroke="#fff" stroke-width="1.6"/>
<!-- tabs -->
<path d="M1705 106H1747V128H1705Z" fill="#b4b6ba"/>
<path d="M1705 105H1746.5V128" fill="none" stroke="#7e8084" stroke-width="1.6"/>
<path d="M1649 128V102H1704V129" fill="#b6b8bc" stroke="#4c4e51" stroke-width="1.6"/>
<!-- list -->
<rect x="1651" y="129" width="259" height="828" fill="#c3c6ca"/>
<path d="M1650 127V958H1911V129" fill="none" stroke="#3e3e42" stroke-width="1.8"/>
<rect x="1651" y="129" width="259" height="26" fill="#2a2a2a"/>
<rect x="1651" y="155" width="259" height="16" fill="url(#gHdr)"/>
<path d="M1651 171.5H1728.5V155" fill="none" stroke="#2fa0bc" stroke-width="1"/>
<path d="M1744.5 155V171M1763.5 155V171M1791.5 155V171M1822.5 155V171M1844.5 155V171M1863.5 155V171" stroke="#d4d6d9" stroke-width="1"/>
<path d="M1709 160.5H1721L1715 166.5Z" fill="#19a7c9"/>
<!-- rows -->
<path d="M1658.5 180V198.5M1658.5 180.5H1666M1658.5 198.5H1666" stroke="#555" stroke-width="1" stroke-dasharray="1 1.5"/>
<path d="M1732 199L1736 204.5L1743 193" fill="none" stroke="#1aa4c4" stroke-width="1.6"/>
<rect x="1745" y="172" width="19" height="17" fill="#9d9d9d"/>
<rect x="1745" y="190" width="19" height="18" fill="#0000ff"/>
<g><circle cx="1772" cy="178.5" r="4.2" fill="#f6e800"/><rect x="1770.3" y="182.5" width="3.4" height="5" fill="#6a6a6a"/>
<circle cx="1772" cy="196.5" r="4.2" fill="#f6e800"/><rect x="1770.3" y="200.5" width="3.4" height="5" fill="#6a6a6a"/></g>
<g fill="none" stroke="#6a6a6a" stroke-width="1.4"><path d="M1801 181V177.5Q1801 174.5 1804 174.5Q1807 174.5 1807 177.5V179M1801 199V195.5Q1801 192.5 1804 192.5Q1807 192.5 1807 195.5V197"/></g>
<rect x="1793" y="180" width="9" height="8" fill="#6a6a6a"/><rect x="1793" y="198" width="9" height="8" fill="#6a6a6a"/>
<circle cx="1797.5" cy="183.5" r="1.2" fill="#1a1a1a"/><circle cx="1797.5" cy="201.5" r="1.2" fill="#1a1a1a"/>
<g><rect x="1825.5" y="176" width="7" height="7" fill="#c8dde3" stroke="#fff" stroke-width="1.4"/><rect x="1828" y="179" width="9" height="8" fill="#17a0c0"/>
<rect x="1825.5" y="194" width="7" height="7" fill="#c8dde3" stroke="#fff" stroke-width="1.4"/><rect x="1828" y="197" width="9" height="8" fill="#17a0c0"/></g>
<!-- panel toolbar icons -->
<path d="M1659 136H1671L1667 141H1656Z" fill="#a9d6e2"/><path d="M1659 141H1671L1667 146H1656Z" fill="#1aa0c0"/>
<path d="M1661.5 143.5V149M1658.8 146.3H1664.2" stroke="#f2e200" stroke-width="2"/>
<path d="M1682 136H1687L1688 137H1694V143H1684Z" fill="#7a7a7a"/><path d="M1685 139H1697L1694 146H1683Z" fill="url(#gTeal)"/>
<path d="M1688 143.5V149M1685.3 146.3H1690.7" stroke="#f2e200" stroke-width="2"/>
<path d="M1709.5 136.5L1711.5 135.5L1722.5 148.5L1720 147Z M1722 136L1719.5 136.5L1710 148.5L1712 147.5Z" fill="#e8313c"/>
<path d="M1737 143H1749L1745 148H1734Z" fill="#9ca6ac"/><path d="M1737 138H1749L1745 143H1734Z" fill="#1aa0c0"/>
<path d="M1740 134.5L1746 138.5L1740 141Z" fill="#f2d000"/>
<path d="M1763 138H1773L1770 141H1761Z M1763 142H1773L1770 145H1761Z" fill="#d0dadf"/>
<path d="M1775 134Q1776 143 1766 148" fill="none" stroke="#1aa4c4" stroke-width="1.4"/><path d="M1763 149L1769 145L1767 150Z" fill="#1aa4c4"/>
<path d="M1790 144H1802L1798 148H1787Z" fill="#6a6a6a"/>
<path d="M1791.5 139Q1791.5 135 1795 135Q1798.5 135 1798.5 138.5Q1798.5 141 1795 142.5V145" fill="none" stroke="#1aa4c4" stroke-width="1.8"/><circle cx="1795" cy="147.5" r="1.1" fill="#1aa4c4"/>
<path d="M1813 135H1827L1821.5 142V148H1818.5V142Z" fill="#1b98b4"/>
<circle cx="1846" cy="142" r="7" fill="url(#gInfo)"/>
<text x="1846" y="146.5" font-family="Liberation Serif" font-weight="700" font-size="11" fill="#fff" text-anchor="middle">i</text>
<path d="M1867 135H1877V149H1867Z" fill="url(#gDoc)"/><circle cx="1869" cy="146" r="0.9" fill="#105a6e"/>
<!-- message scrollbar -->
<rect x="1900.5" y="961.5" width="16.5" height="36" fill="#3a3a3a"/>
<rect x="1903" y="963" width="12" height="10" fill="#232323"/>
<rect x="1903" y="986" width="12" height="10.5" fill="#232323"/>
<path d="M1904 970H1914L1909 965Z" fill="#fff"/>
<rect x="1902" y="975" width="14" height="9" fill="#b9bbbe"/>
<circle cx="1908.5" cy="979.5" r="3.2" fill="#e2e5e8"/>
<path d="M1904 988H1914L1909 993Z" fill="#fff"/>
<!-- command icons -->
<path d="M1876 1003L1870 1011H1874L1871 1018L1880 1009H1876L1879 1003Z" fill="#17a8cc"/>
<g stroke="#8a8a8a" stroke-width="1"><path d="M1897.5 1003.5H1913.5V1019.5H1897.5Z M1897.5 1007.5H1913.5M1897.5 1011.5H1913.5M1897.5 1015.5H1913.5M1901.5 1003.5V1019.5M1905.5 1003.5V1019.5M1909.5 1003.5V1019.5" fill="none"/></g>
<rect x="1905" y="1011" width="1.5" height="1.5" fill="#fff"/>
<!-- taskbar -->
<rect x="149" y="1050" width="36" height="30" fill="#3a3a3c"/>
<path d="M79 1078H107V1080H79Z M116 1078H144V1080H116Z M149 1078H185V1080H149Z M190 1078H218V1080H190Z" fill="#77b7f0"/>
<path d="M10 1058.5L17 1057.5V1064.5H10Z M18 1057.3L26 1056V1064.5H18Z M10 1065.5H17V1072.5L10 1071.5Z M18 1065.5H26V1074L18 1072.7Z" fill="#fff"/>
<circle cx="55" cy="1062.5" r="5.5" fill="none" stroke="#fff" stroke-width="1.3"/>
<path d="M51 1066.5L46 1072.5" stroke="#fff" stroke-width="1.5"/>
<circle cx="93" cy="1065" r="7.2" fill="#dd4b3e"/>
<path d="M93 1065L86.8 1061.4A7.2 7.2 0 0 0 89.4 1071.2Z" fill="#1da362"/>
<path d="M93 1065L89.4 1071.2A7.2 7.2 0 0 0 99.2 1061.4Z" fill="#ffcd40"/>
<circle cx="93" cy="1065" r="3.2" fill="#fff"/><circle cx="93" cy="1065" r="2.4" fill="#4a8af4"/>
<path d="M124.5 1063Q127 1058 130.5 1058Q134 1058 135.5 1063M124.5 1067Q127 1072 130.5 1072Q134 1072 135.5 1067" fill="none" stroke="#f07a24" stroke-width="1.8"/>
<circle cx="167" cy="1065" r="8" fill="#12a5c8"/>
<text x="167" y="1068" font-family="Liberation Sans" font-size="8" font-weight="700" fill="none" stroke="#d9f2f8" stroke-width="0.6" text-anchor="middle">GiD</text>
<path d="M196 1058H202L203.5 1059.5H212V1072H196Z" fill="#e8c04a"/>
<path d="M196 1062H212V1072H196Z" fill="#f5d46a"/>
<path d="M201 1072V1067H207V1072" fill="none" stroke="#2d8fe0" stroke-width="2"/>
<!-- tray -->
<g fill="none" stroke="#fff" stroke-width="1.1">
<circle cx="1681.5" cy="1059.8" r="2.6"/><path d="M1678.8 1064.8Q1682 1062.8 1685.5 1066.5"/>
<circle cx="1675" cy="1066" r="2.6"/><path d="M1671 1072.5Q1675 1068.2 1679 1072.5"/>
<path d="M1702 1068.5L1708 1062L1714 1068.5"/>
<rect x="1728.5" y="1063.5" width="10" height="6"/><path d="M1739.5 1065.5V1067.5M1725 1062V1065M1724 1065H1728"/>
<path d="M1748.5 1063.5H1751.5L1755 1060V1071L1751.5 1067.5H1748.5Z"/>
<path d="M1757.5 1063.5Q1759 1065.5 1757.5 1067.5M1759.5 1062Q1762 1065.5 1759.5 1069M1761.5 1060.5Q1765 1065.5 1761.5 1070.5" stroke-opacity="0.8"/>
<path d="M1775 1072Q1779 1063 1788 1061M1778 1072Q1781 1066 1787 1064.5M1781 1072Q1783 1068.5 1786.5 1068" stroke-opacity="0.85"/>
<path d="M1879.5 1058.5H1895.5V1069.5H1889.5L1886.5 1072.5V1069.5H1879.5Z"/>
</g>
<rect x="1725" y="1064.5" width="7" height="4" fill="#fff"/>
<circle cx="1786" cy="1071" r="1.2" fill="#fff"/>
<path d="M1915.5 1050V1080" stroke="#4a4a4a" stroke-width="1"/>
<!-- canvas axes -->
<path d="M118 883H122.2V907H118Z" fill="#33e040"/>
<path d="M120 868L126 883H114Z" fill="#3ef04a"/>
<path d="M124 907.7H148V911.9H124Z" fill="#f03a3a"/>
<path d="M147 903.8L162 910L147 916.1Z" fill="#e83636"/>
<circle cx="120" cy="911" r="6" fill="#17445c"/>
<path d="M115 905L125 915" stroke="#2b7fa6" stroke-width="2"/>
<text x="124" y="863.5" font-family="Liberation Serif" font-weight="700" font-size="13" fill="#fff" text-anchor="middle">y</text>
<text x="173" y="910.5" font-family="Liberation Serif" font-weight="700" font-size="13" fill="#fff" text-anchor="middle">x</text>
<text x="124" y="911" font-family="Liberation Mono" font-weight="700" font-size="8" fill="#fff" text-anchor="middle">z</text>
</svg>

<div class="t" style="left:22.58px;top:6px;font-size:12px;color:#000;font-weight:400;transform:scaleX(0.9167)">GiD x64</div>
<div class="t" style="left:139.52px;top:6px;font-size:12px;color:#000;font-weight:400;transform:scaleX(0.9806)">Project: UNNAMED</div>
<div class="t" style="left:10.90px;top:29px;font-size:12px;color:#d9d9d9;font-weight:400;transform:scaleX(0.8521)">Files</div>
<div class="a" style="left:11.2px;top:40px;width:6.0px;height:1px;background:#d9d9d9"></div>
<div class="t" style="left:53.80px;top:29px;font-size:12px;color:#d9d9d9;font-weight:400;transform:scaleX(0.9000)">View</div>
<div class="a" style="left:53.3px;top:40px;width:7.2px;height:1px;background:#d9d9d9"></div>
<div class="t" style="left:98.74px;top:29px;font-size:12px;color:#d9d9d9;font-weight:400;transform:scaleX(0.8577)">Geometry</div>
<div class="a" style="left:99.1px;top:40px;width:7.7px;height:1px;background:#d9d9d9"></div>
<div class="t" style="left:165.82px;top:29px;font-size:12px;color:#d9d9d9;font-weight:400;transform:scaleX(0.8784)">Utilities</div>
<div class="a" style="left:166.2px;top:40px;width:7.0px;height:1px;background:#d9d9d9"></div>
<div class="t" style="left:220.76px;top:29px;font-size:12px;color:#d9d9d9;font-weight:400;transform:scaleX(0.9375)">Data</div>
<div class="a" style="left:221.2px;top:40px;width:7.5px;height:1px;background:#d9d9d9"></div>
<div class="t" style="left:265.79px;top:29px;font-size:12px;color:#d9d9d9;font-weight:400;transform:scaleX(0.9071)">Mesh</div>
<div class="a" style="left:266.2px;top:40px;width:8.2px;height:1px;background:#d9d9d9"></div>
<div class="t" style="left:313.69px;top:29px;font-size:12px;color:#d9d9d9;font-weight:400;transform:scaleX(0.9104)">Calculate</div>
<div class="a" style="left:314.1px;top:40px;width:7.3px;height:1px;background:#d9d9d9"></div>
<div class="t" style="left:379.46px;top:29px;font-size:12px;color:#d9d9d9;font-weight:400;transform:scaleX(0.9435)">Help</div>
<div class="a" style="left:379.9px;top:40px;width:7.5px;height:1px;background:#d9d9d9"></div>
<div class="t" style="left:474.20px;top:57px;font-size:12px;color:#000;font-weight:400;transform:scaleX(0.8698)">VoronoiGrid</div>
<div class="t" style="left:1891.70px;top:65px;font-size:11px;color:#f0f0f0;font-weight:400;transform:scaleX(1.0000)">v14</div>
<div class="t" style="left:1856.70px;top:58px;font-size:10px;color:#f4fbfd;font-weight:700;transform:scaleX(1.0294)">GiD</div>
<div class="t" style="left:1680.00px;top:85px;font-size:12px;color:#7e8084;font-weight:400;transform:scaleX(0.9005)">Double click here to tear off the window</div>
<div class="t" style="left:1659.42px;top:109px;font-size:12px;color:#000;font-weight:400;transform:scaleX(0.8843)">Layers</div>
<div class="a" style="left:1659.8px;top:120px;width:5.3px;height:1px;background:#000"></div>
<div class="t" style="left:1706.92px;top:111px;font-size:12px;color:#000;font-weight:400;transform:scaleX(0.8803)">Groups</div>
<div class="a" style="left:1707.3px;top:122px;width:7.9px;height:1px;background:#000"></div>
<div class="t" style="left:1672.90px;top:158px;font-size:12px;color:#000;font-weight:400;transform:scaleX(0.9033)">Name</div>
<div class="t" style="left:1750.86px;top:158px;font-size:12px;color:#000;font-weight:400;transform:scaleX(0.8929)">C</div>
<div class="t" style="left:1769.53px;top:158px;font-size:12px;color:#000;font-weight:400;transform:scaleX(0.9733)">I/O</div>
<div class="t" style="left:1797.83px;top:158px;font-size:12px;color:#000;font-weight:400;transform:scaleX(0.9722)">F/U</div>
<div class="t" style="left:1827.30px;top:158px;font-size:12px;color:#000;font-weight:400;transform:scaleX(1.1182)">Tr</div>
<div class="t" style="left:1850.28px;top:158px;font-size:12px;color:#000;font-weight:400;transform:scaleX(1.0167)">B</div>
<div class="t" style="left:1669.59px;top:175px;font-size:12px;color:#000;font-weight:400;transform:scaleX(0.9057)">Layer0</div>
<div class="t" style="left:1670.10px;top:193px;font-size:12px;color:#000;font-weight:400;transform:scaleX(0.8730)">VoronoiGrid</div>
<div class="t" style="left:4.61px;top:964px;font-size:12px;color:#000;font-weight:400;transform:scaleX(0.8935)">Pick LEFTMOUSE to desplace view (ESC to quit)</div>
<div class="t" style="left:4.61px;top:978px;font-size:12px;color:#000;font-weight:400;transform:scaleX(0.8906)">Pick LEFTMOUSE to desplace view (ESC to quit).</div>
<div class="t" style="left:6.70px;top:1006px;font-size:12px;color:#dcdcdc;font-weight:400;transform:scaleX(0.8544)">Command:</div>
<div class="t" style="left:100.80px;top:1033px;font-size:12px;color:#e0e0e0;font-weight:400;transform:scaleX(0.9058)">Zoom: x 0.98</div>
<div class="t" style="left:439.11px;top:1033px;font-size:12px;color:#e0e0e0;font-weight:400;transform:scaleX(0.8923)">Nodes: 0, Elements: 0</div>
<div class="t" style="left:869.40px;top:1033px;font-size:12px;color:#e0e0e0;font-weight:400;transform:scaleX(0.8951)">Render: normal</div>
<div class="t" style="left:1199.09px;top:1033px;font-size:12px;color:#e0e0e0;font-weight:400;transform:scaleX(0.9115)">Layers: 2</div>
<div class="t" style="left:1517.81px;top:1033px;font-size:12px;color:#e0e0e0;font-weight:400;transform:scaleX(0.9375)">( 14.09418,&nbsp; 5.490509,&nbsp; 0)</div>
<div class="t" style="left:1856.36px;top:1033px;font-size:12px;color:#e0e0e0;font-weight:400;transform:scaleX(0.9412)">Pre</div>
<div class="t" style="left:1797.25px;top:1059px;font-size:12px;color:#ffffff;font-weight:400;transform:scaleX(0.9542)">ENG</div>
<div class="t" style="left:1833.45px;top:1059px;font-size:12px;color:#ffffff;font-weight:400;transform:scaleX(0.9536)">13:43</div>
</body></html>
